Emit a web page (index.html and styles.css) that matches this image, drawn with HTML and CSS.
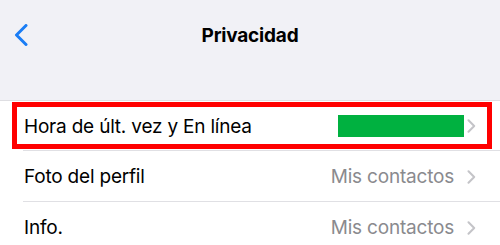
FILE: index.html
```html
<!DOCTYPE html>
<html lang="es">
<head>
<meta charset="utf-8">
<link rel="stylesheet" href="styles.css">
</head>
<body>
<div class="screen">
  <header class="header">
    <div class="nav">
      <div class="nav-left">
        <svg class="back" width="14" height="22" viewBox="0 0 14 22"><path d="M12 1.5 L2.5 11 L12 20.5" fill="none" stroke="#1a7df5" stroke-width="3" stroke-linecap="round" stroke-linejoin="round"/></svg>
      </div>
      <h1 class="title">Privacidad</h1>
      <div class="nav-right"></div>
    </div>
  </header>
  <ul class="list">
    <li class="row">
      <span class="label">Hora de últ. vez y En línea</span>
      <span class="redacted"></span>
      <svg class="chev" width="9" height="14" viewBox="0 0 9 14"><path d="M1.5 1.2 L7.2 7 L1.5 12.8" fill="none" stroke="#c4c4c8" stroke-width="2" stroke-linecap="round" stroke-linejoin="round"/></svg>
    </li>
    <li class="row">
      <span class="label">Foto del perfil</span>
      <span class="value">Mis contactos</span>
      <svg class="chev" width="9" height="14" viewBox="0 0 9 14"><path d="M1.5 1.2 L7.2 7 L1.5 12.8" fill="none" stroke="#c4c4c8" stroke-width="2" stroke-linecap="round" stroke-linejoin="round"/></svg>
    </li>
    <li class="row">
      <span class="label">Info.</span>
      <span class="value">Mis contactos</span>
      <svg class="chev" width="9" height="14" viewBox="0 0 9 14"><path d="M1.5 1.2 L7.2 7 L1.5 12.8" fill="none" stroke="#c4c4c8" stroke-width="2" stroke-linecap="round" stroke-linejoin="round"/></svg>
    </li>
  </ul>
  <div class="highlight"></div>
</div>
</body>
</html>
```

FILE: styles.css
```css
* { box-sizing: border-box; }
html, body { margin: 0; padding: 0; background: #ffffff; }
body {
  font-family: Inter, "Noto Sans", sans-serif;
  color: #000;
  width: 500px;
  height: 245px;
  overflow: hidden;
}
.screen { position: relative; }
.header {
  height: 101px;
  background: #f1f1f6;
  border-bottom: 1px solid #dedee2;
}
.nav {
  height: 70px;
  display: grid;
  grid-template-columns: 1fr auto 1fr;
  align-items: center;
}
.nav-left { padding-left: 14px; display: flex; align-items: center; }
.back { display: block; }
.title {
  margin: 0;
  font-size: 19px;
  font-weight: 700;
  letter-spacing: -0.2px;
}
.list { list-style: none; margin: 0; padding: 0; }
.row {
  position: relative;
  height: 51px;
  display: flex;
  align-items: center;
  padding: 0 24px 0 24px;
  font-size: 19px;
  letter-spacing: -0.2px;
}
.row + .row::before {
  content: "";
  position: absolute;
  left: 23px;
  right: 0;
  top: -1px;
  height: 1px;
  background: #e0e0e4;
}
.row:first-child { height: 50px; }
.label { flex: 1; }
.value { color: #8a8a8e; }
.redacted {
  width: 126px;
  height: 22px;
  background: #00b140;
  margin-right: -10px;
}
.chev { display: block; margin-left: 13px; }
.highlight {
  position: absolute;
  left: 12px;
  top: 102px;
  width: 480px;
  height: 47px;
  border: 5px solid #ff0000;
}
```
